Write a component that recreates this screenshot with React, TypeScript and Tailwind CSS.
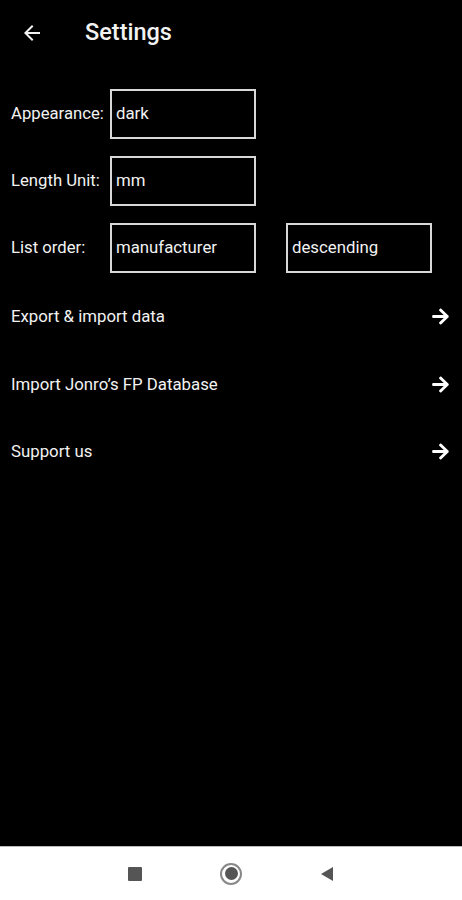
import { FaArrowRight } from 'react-icons/fa'

const fields = [
  { label: 'Appearance:', values: ['dark'] },
  { label: 'Length Unit:', values: ['mm'] },
  { label: 'List order:', values: ['manufacturer', 'descending'] },
]

const links = ['Export & import data', 'Import Jonro\u2019s FP Database', 'Support us']

function Box({ value }: { value: string }) {
  return (
    <div className="w-[146px] h-[50px] border-2 border-[#d8d8d8] flex items-center px-[4px] text-[16.8px] text-[#f2f2f2]">
      {value}
    </div>
  )
}

export default function App() {
  return (
    <div className="w-[462px] h-[900px] flex flex-col bg-black text-[#f2f2f2]"
      style={{ fontFamily: 'Roboto, "Liberation Sans", sans-serif' }}>

      {/* Header */}
      <div className="h-[66px] flex items-center">
        <div className="w-[85px] pl-[20px] flex items-center">
          <svg width="24" height="24" viewBox="0 0 24 24" fill="#f2f2f2">
            <path d="M20 11H7.83l5.59-5.59L12 4l-8 8 8 8 1.41-1.41L7.83 13H20v-2z" />
          </svg>
        </div>
        <span className="text-[23.5px] font-medium">Settings</span>
      </div>

      {/* Content */}
      <div className="flex-1 flex flex-col">
        <div className="flex flex-col gap-[17px] mt-[23px] pl-[11px]">
          {fields.map(({ label, values }) => (
            <div key={label} className="flex items-center">
              <span className="w-[99px] text-[16.7px] whitespace-nowrap">{label}</span>
              <div className="flex gap-[30px]">
                {values.map((v) => <Box key={v} value={v} />)}
              </div>
            </div>
          ))}
        </div>

        <div className="flex flex-col mt-[10px]">
          {links.map((l) => (
            <div key={l} className="h-[67.5px] flex items-center justify-between pl-[11px] pr-[12px]">
              <span className="text-[16.8px]">{l}</span>
              <FaArrowRight className="w-[19px] h-[19px] text-white" />
            </div>
          ))}
        </div>
      </div>

      {/* Nav bar */}
      <div className="h-[54px] bg-white border-t border-[#bbb] flex items-center justify-center gap-[78px]">
        <div className="w-[14px] h-[14px] bg-[#555] rounded-[1px]" />
        <div className="w-[22px] h-[22px] rounded-full border-2 border-[#888] flex items-center justify-center">
          <div className="w-[13px] h-[13px] rounded-full bg-[#555]" />
        </div>
        <svg width="14" height="16" viewBox="0 0 14 16">
          <path d="M13 1L1 8l12 7z" fill="#555" />
        </svg>
      </div>
    </div>
  )
}
